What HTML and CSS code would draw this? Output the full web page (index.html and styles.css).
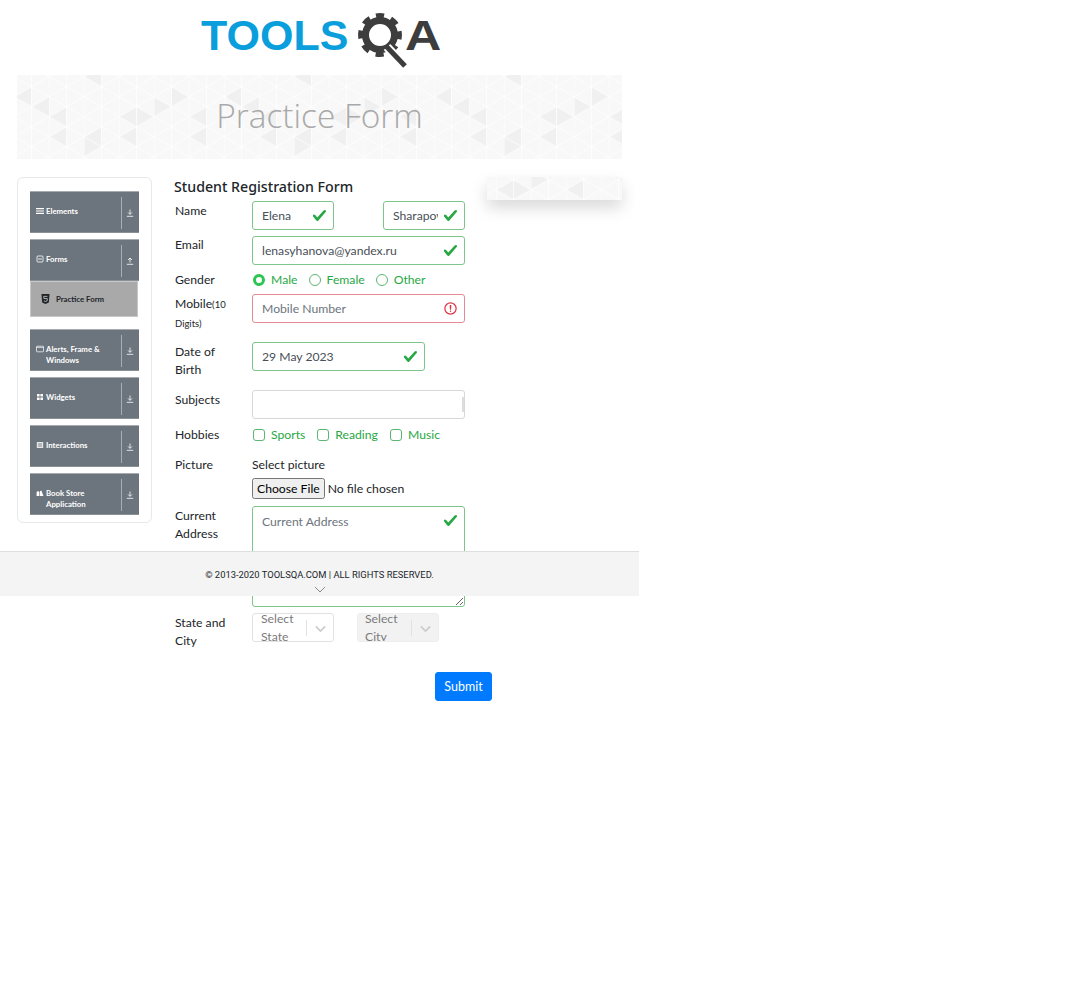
FILE: index.html
```html
<!DOCTYPE html>
<html lang="en">
<head>
    <meta charset="UTF-8">
    <meta name="viewport" content="width=device-width, initial-scale=1.0">
    <title>ToolsQA</title>
    <link rel="stylesheet" href="styles.css">
</head>
<body>
    <div class="page">
        <header class="logo-bar">
            <svg class="logo" width="243" height="58" viewBox="0 0 243 58">
                <text class="logo-tools" x="3" y="39">TOOLS</text>
                <circle cx="182" cy="24" r="14.5" fill="none" stroke="#3d3d3d" stroke-width="7"/>
                <circle cx="182" cy="24" r="19.5" fill="none" stroke="#3d3d3d" stroke-width="5" stroke-dasharray="8 7.3" transform="rotate(-101.75 182 24)"/>
                <path d="M189 36L207 55" stroke="#fff" stroke-width="9" fill="none"/>
                <path d="M188 35L207 55" stroke="#3d3d3d" stroke-width="5" fill="none"/>
                <text class="logo-a" transform="translate(207 39) scale(1.17 1)">A</text>
            </svg>
        </header>

        <div class="banner"><h1>Practice Form</h1></div>

        <div class="main">
            <aside class="sidebar">
                <div class="bar">
                    <span class="bar-title">
                        <svg class="bar-icon" viewBox="0 0 8 8"><path d="M0 1h8v1.2H0zM0 3.4h8v1.2H0zM0 5.8h8V7H0z" fill="#fff"/></svg>
                        Elements
                    </span>
                    <span class="bar-arrow"><svg viewBox="0 0 8 8"><path d="M4 .5v4.6M2 3.4l2 2 2-2M.8 7.3h6.4" fill="none" stroke="#fff" stroke-width=".8"/></svg></span>
                </div>
                <div class="bar">
                    <span class="bar-title">
                        <svg class="bar-icon" viewBox="0 0 8 8"><rect x="1" y="1" width="6" height="6" rx="1" fill="none" stroke="#fff" stroke-width=".8"/><path d="M2.2 4h3.6" stroke="#fff" stroke-width=".9"/></svg>
                        Forms
                    </span>
                    <span class="bar-arrow"><svg viewBox="0 0 8 8"><path d="M4 5.6V1M2 3l2-2 2 2M.8 7.3h6.4" fill="none" stroke="#fff" stroke-width=".8"/></svg></span>
                </div>
                <div class="sub-item">
                    <svg class="sub-icon" viewBox="0 0 10 11"><path d="M.5 0h9l-.8 9.4L5 11l-3.7-1.6z" fill="#212529"/><path d="M7.2 2.6H3l.2 2.4h3.8l-.2 2.6L5 8.2l-1.8-.6" fill="none" stroke="#ddd" stroke-width=".8"/></svg>
                    Practice Form
                </div>
                <div class="bar bar-spaced">
                    <span class="bar-title bar-title-wrap">
                        <svg class="bar-icon" viewBox="0 0 8 8"><rect x=".5" y="1.2" width="7" height="5.6" rx=".6" fill="none" stroke="#fff" stroke-width=".7"/><path d="M.5 2.4h7" stroke="#fff" stroke-width=".7"/></svg>
                        <span>Alerts, Frame &amp; Windows</span>
                    </span>
                    <span class="bar-arrow"><svg viewBox="0 0 8 8"><path d="M4 .5v4.6M2 3.4l2 2 2-2M.8 7.3h6.4" fill="none" stroke="#fff" stroke-width=".8"/></svg></span>
                </div>
                <div class="bar">
                    <span class="bar-title">
                        <svg class="bar-icon" viewBox="0 0 8 8"><path d="M1 1h2.6v2.6H1zM4.4 1H7v2.6H4.4zM1 4.4h2.6V7H1zM4.4 4.4H7V7H4.4z" fill="#fff"/></svg>
                        Widgets
                    </span>
                    <span class="bar-arrow"><svg viewBox="0 0 8 8"><path d="M4 .5v4.6M2 3.4l2 2 2-2M.8 7.3h6.4" fill="none" stroke="#fff" stroke-width=".8"/></svg></span>
                </div>
                <div class="bar">
                    <span class="bar-title">
                        <svg class="bar-icon" viewBox="0 0 8 8"><rect x=".8" y="1" width="6.4" height="6" fill="#e4e6e8"/><path d="M2 3h4M2 5h4" stroke="#6c757d" stroke-width=".8"/></svg>
                        Interactions
                    </span>
                    <span class="bar-arrow"><svg viewBox="0 0 8 8"><path d="M4 .5v4.6M2 3.4l2 2 2-2M.8 7.3h6.4" fill="none" stroke="#fff" stroke-width=".8"/></svg></span>
                </div>
                <div class="bar bar-last">
                    <span class="bar-title bar-title-wrap">
                        <svg class="bar-icon" viewBox="0 0 8 8"><path d="M.6 7V3l1.6-1 1.2 1v4zM4 7V2.2l1.4-.8 2 5.6z" fill="#fff"/></svg>
                        <span>Book Store Application</span>
                    </span>
                    <span class="bar-arrow"><svg viewBox="0 0 8 8"><path d="M4 .5v4.6M2 3.4l2 2 2-2M.8 7.3h6.4" fill="none" stroke="#fff" stroke-width=".8"/></svg></span>
                </div>
            </aside>

            <form class="form">
                <h5 class="form-title">Student Registration Form</h5>

                <div class="row">
                    <label class="label">Name</label>
                    <div class="controls controls-split">
                        <input class="input input-ok input-half" type="text" value="Elena">
                        <input class="input input-ok input-half" type="text" value="Sharapova">
                    </div>
                </div>
                <div class="row row-email">
                    <label class="label">Email</label>
                    <div class="controls">
                        <input class="input input-ok" type="text" value="lenasyhanova@yandex.ru">
                    </div>
                </div>
                <div class="row row-gender">
                    <label class="label">Gender</label>
                    <div class="choices">
                        <span class="choice"><span class="radio radio-on"></span>Male</span>
                        <span class="choice"><span class="radio"></span>Female</span>
                        <span class="choice"><span class="radio"></span>Other</span>
                    </div>
                </div>
                <div class="row row-tall row-mobile">
                    <label class="label">Mobile<small>(10 Digits)</small></label>
                    <div class="controls">
                        <input class="input input-bad" type="text" placeholder="Mobile Number">
                    </div>
                </div>
                <div class="row row-tall">
                    <label class="label">Date of Birth</label>
                    <div class="controls">
                        <input class="input input-ok input-date" type="text" value="29 May 2023">
                    </div>
                </div>
                <div class="row">
                    <label class="label">Subjects</label>
                    <div class="controls">
                        <div class="subjects"><span class="subjects-strip"></span></div>
                    </div>
                </div>
                <div class="row row-hobbies">
                    <label class="label">Hobbies</label>
                    <div class="choices choices-hobbies">
                        <span class="choice"><span class="check"></span>Sports</span>
                        <span class="choice"><span class="check"></span>Reading</span>
                        <span class="choice"><span class="check"></span>Music</span>
                    </div>
                </div>
                <div class="row row-picture">
                    <label class="label">Picture</label>
                    <div class="controls">
                        <div class="picture-title">Select picture</div>
                        <input class="file" type="file">
                    </div>
                </div>
                <div class="row row-address">
                    <label class="label">Current Address</label>
                    <div class="controls">
                        <textarea class="input input-ok address" placeholder="Current Address"></textarea>
                    </div>
                </div>
                <div class="row row-state">
                    <label class="label">State and City</label>
                    <div class="selects">
                        <div class="select">
                            <span class="select-text">Select State</span>
                            <span class="select-arrow"><svg viewBox="0 0 20 20"><path d="M4.5 7.5L10 13l5.5-5.5" fill="none" stroke="#ccc" stroke-width="2"/></svg></span>
                        </div>
                        <div class="select select-off">
                            <span class="select-text">Select City</span>
                            <span class="select-arrow"><svg viewBox="0 0 20 20"><path d="M4.5 7.5L10 13l5.5-5.5" fill="none" stroke="#ccc" stroke-width="2"/></svg></span>
                        </div>
                    </div>
                </div>
                <button class="submit" type="button">Submit</button>
            </form>

            <div class="side-banner"></div>
        </div>

        <footer class="footer">
            <span>© 2013-2020 TOOLSQA.COM | ALL RIGHTS RESERVED.</span>
            <svg class="footer-arrow" viewBox="0 0 12 7"><path d="M1 1l5 5 5-5" fill="none" stroke="#888" stroke-width="1"/></svg>
        </footer>
    </div>
</body>
</html>
```
FILE: styles.css
```css
body {
    margin: 0;
    font-family: Lato, "Noto Sans", sans-serif;
    font-size: 12.2px;
    color: #212529;
    background-color: #fff;
}
.page {
    position: relative;
    width: 639px;
}
.logo-bar {
    height: 75px;
    display: flex;
    justify-content: center;
    padding-top: 11px;
    box-sizing: border-box;
}
.logo-tools,
.logo-a {
    font-family: "Liberation Sans", sans-serif;
    font-weight: bold;
    font-size: 43px;
}
.logo-tools {
    fill: #0a9fdc;
}
.logo-a {
    fill: #3d3d3d;
}
.banner,
.side-banner {
    background-color: #f8f8f8;
    background-image: url("data:image/svg+xml,%3Csvg xmlns='http://www.w3.org/2000/svg' width='210' height='120'%3E%3Cdefs%3E%3Cpattern id='t' x='-3' y='1.7' width='35' height='20' patternUnits='userSpaceOnUse'%3E%3Cpath d='M0 0V20M17.5 0V20M0 0L35 20M0 20L35 0' stroke='%23fff' stroke-opacity='.75' stroke-width='1' fill='none'/%3E%3C/pattern%3E%3C/defs%3E%3Cg fill='%23f0f0f0'%3E%3Cpath d='M32 41.7L49.5 31.7V51.7zM102 41.7L119.5 31.7V51.7zM137 41.7L119.5 31.7V51.7zM172 41.7L189.5 31.7V51.7zM32 61.7L49.5 51.7V71.7zM67 61.7L84.5 51.7V71.7zM102 61.7L119.5 51.7V71.7zM172 61.7L189.5 51.7V71.7zM14.5 31.7L32 21.7V41.7zM154.5 31.7L137 21.7V41.7zM84.5 71.7L67 61.7V81.7zM67 1.7L84.5 -8.3V11.7zM172 21.7L154.5 11.7V31.7zM-3 21.7L14.5 11.7V31.7z'/%3E%3C/g%3E%3Crect width='210' height='120' fill='url(%23t)'/%3E%3C/svg%3E");
}
.banner {
    height: 84px;
    margin: 0 17px;
    background-repeat: repeat;
    display: flex;
    align-items: center;
    justify-content: center;
}
.banner h1 {
    margin: 0 0 4px;
    font-family: "Open Sans", sans-serif;
    font-weight: 300;
    font-size: 33.4px;
    color: #a9a9a9;
}
.main {
    display: flex;
    align-items: flex-start;
    margin: 18px 17px 0;
}

/* left menu */
.sidebar {
    width: 135px;
    box-sizing: border-box;
    padding: 13px 12px 7px;
    border: 1px solid #e6e8ea;
    border-radius: 6px;
}
.bar {
    display: flex;
    height: 42px;
    margin-bottom: 6px;
    box-sizing: border-box;
    background-color: #6c757d;
    border-top: 1px solid #a6abb0;
    border-bottom: 1px solid #8a9096;
    color: #fff;
    font-size: 7.8px;
    font-weight: bold;
    line-height: 10.5px;
}
.bar-spaced {
    margin-top: 12px;
}
.bar-last {
    margin-bottom: 0;
}
.bar-title {
    flex: 1;
    display: flex;
    align-items: center;
    padding: 0 0 2px 6px;
    box-sizing: border-box;
}
.bar-title-wrap {
    padding: 14px 0 0 6px;
}
.bar-icon {
    flex: none;
    width: 8px;
    height: 8px;
    margin-right: 2px;
}
.bar-title-wrap .bar-icon {
    align-self: flex-start;
    margin-top: 1px;
}
.bar-title-wrap span {
    align-self: flex-start;
    padding-right: 6px;
}
.bar-arrow {
    flex: none;
    width: 18px;
    margin: 5px 0 3px;
    padding-right: 2px;
    box-sizing: border-box;
    border-left: 1px solid #a9aeb2;
    display: flex;
    align-items: center;
    justify-content: center;
}
.bar-arrow svg {
    width: 8px;
    height: 8px;
}
.sub-item {
    display: flex;
    align-items: center;
    width: 108px;
    height: 36px;
    margin-top: -6px;
    padding-left: 10px;
    box-sizing: border-box;
    background-color: #a9a9a9;
    border: 1px solid #c6c8ca;
    font-size: 7.8px;
    font-weight: bold;
}
.sub-icon {
    width: 9px;
    height: 10px;
    margin-right: 6px;
}

/* form */
.form {
    width: 313px;
    margin-left: 22px;
    flex: none;
}
.form-title {
    margin: 0 0 4px;
    font-family: "Noto Sans", sans-serif;
    font-size: 14.2px;
    font-weight: 500;
    line-height: 20px;
}
.row {
    display: flex;
    width: 291px;
}
.label {
    flex: none;
    width: 78px;
    margin-top: 1px;
    padding-left: 1px;
    box-sizing: border-box;
    line-height: 18px;
    padding-right: 10px;
}
.label small {
    font-size: 9.5px;
}
.controls {
    flex: 1;
    min-width: 0;
}
.controls-split,
.selects {
    display: flex;
    justify-content: space-between;
}
.input {
    display: block;
    width: 100%;
    height: 29px;
    padding: 0 26px 0 9px;
    box-sizing: border-box;
    border: 1px solid #7cc68d;
    border-radius: 3px;
    background-color: #fff;
    background-repeat: no-repeat;
    font-family: inherit;
    font-size: 12.2px;
    color: #495057;
    outline: none;
}
.input::placeholder {
    color: #6c757d;
}
.input-ok {
    background-image: url("data:image/svg+xml,%3Csvg xmlns='http://www.w3.org/2000/svg' width='8' height='8' viewBox='0 0 8 8'%3E%3Cpath fill='%2328a745' d='M2.3 6.73L.6 4.53c-.4-1.04.46-1.4 1.1-.8l1.1 1.4 3.4-3.8c.6-.63 1.6-.27 1.2.7l-4 4.6c-.43.5-.8.4-1.1.1z'/%3E%3C/svg%3E");
    background-size: 15px 15px;
    background-position: right 6px center;
}
.input-bad {
    border-color: #e58a94;
    background-image: url("data:image/svg+xml,%3Csvg xmlns='http://www.w3.org/2000/svg' width='12' height='12' viewBox='0 0 12 12' fill='none' stroke='%23dc3545'%3E%3Ccircle cx='6' cy='6' r='4.5'/%3E%3Cpath stroke-linejoin='round' d='M5.8 3.6h.4L6 6.5z'/%3E%3Ccircle cx='6' cy='8.2' r='.6' fill='%23dc3545' stroke='none'/%3E%3C/svg%3E");
    background-size: 15px 15px;
    background-position: right 6px center;
}
.input-half {
    width: 82px;
}
.input-date {
    width: 173px;
}
.row-email {
    margin-top: 6px;
}
.row-email .label {
    margin-top: 0;
}
.row-gender {
    margin-top: 6px;
    height: 18px;
}
.row-gender .label {
    margin-top: 0;
}
.row-gender .choices {
    margin-top: -1px;
}
.row-mobile {
    margin-top: 5px;
}
.row-tall {
    height: 48px;
}
.row-hobbies {
    margin-top: 6px;
    height: 19px;
}
.row-picture {
    margin-top: 11px;
}
.row-address {
    margin-top: 7px;
}
.row-state {
    margin-top: 6px;
    height: 37px;
}
.choices {
    display: flex;
    align-items: center;
    gap: 10px;
}
.choices-hobbies {
    gap: 11px;
}
.choice {
    display: flex;
    align-items: center;
    color: #28a745;
}
.radio,
.check {
    width: 12px;
    height: 12px;
    margin: 0 6px 0 1px;
    box-sizing: border-box;
    border: 1px solid #5cb571;
    background-color: #fff;
}
.radio {
    border-radius: 50%;
}
.radio-on {
    border: 3.5px solid #2dc653;
}
.check {
    border-radius: 3px;
}
.subjects {
    position: relative;
    height: 29px;
    box-sizing: border-box;
    border: 1px solid #d6d8da;
    border-radius: 3px;
}
.subjects-strip {
    position: absolute;
    right: 0;
    top: 6px;
    width: 2px;
    height: 15px;
    background-color: #ddd;
}
.picture-title {
    line-height: 18px;
    margin-top: 1px;
    margin-bottom: 4px;
}
.file {
    display: block;
    width: 200px;
    font-family: inherit;
    font-size: 12.2px;
}
.file::file-selector-button {
    height: 21px;
    padding: 0 3px;
    margin-right: 3px;
    font-family: inherit;
    font-size: 12.2px;
}
.address {
    height: 101px;
    padding-top: 7px;
    background-position: right 6px top 6px;
}
.select {
    display: flex;
    width: 82px;
    height: 29px;
    box-sizing: border-box;
    border: 1px solid #e2e2e2;
    border-radius: 3px;
    overflow: hidden;
    color: #7b7b7b;
}
.selects {
    gap: 23px;
    justify-content: flex-start;
}
.select-off {
    background-color: #f2f2f2;
    border-color: #eee;
}
.select-off .select-text {
    padding-left: 7px;
}
.select-text {
    flex: 1;
    padding: 0 8px;
    margin-top: -4px;
    line-height: 18px;
}
.select-arrow {
    flex: none;
    width: 26px;
    height: 16px;
    margin-top: 6px;
    border-left: 1px solid #e2e2e2;
    display: flex;
    align-items: center;
    justify-content: center;
}
.select-arrow svg {
    width: 17px;
    height: 17px;
}
.submit {
    display: block;
    width: 57px;
    height: 29px;
    margin: 22px 0 0 261px;
    padding: 0;
    border: 1px solid #007bff;
    border-radius: 3px;
    background-color: #007bff;
    color: #fff;
    font-family: inherit;
    font-size: 12.5px;
}
.side-banner {
    flex: none;
    width: 135px;
    height: 23px;
    background-position: -93px -29px;
    box-shadow: 0 8px 16px rgba(0, 0, 0, 0.15);
}

/* footer lies over the form */
.footer {
    position: absolute;
    left: 0;
    top: 551px;
    width: 100%;
    height: 45px;
    box-sizing: border-box;
    padding-top: 16px;
    background-color: #f4f4f4;
    border-top: 1px solid #dedede;
    text-align: center;
    font-family: Roboto, sans-serif;
    font-size: 9.4px;
    line-height: 14px;
}
.footer-arrow {
    display: block;
    width: 12px;
    height: 7px;
    margin: 4px auto 0;
}
```
